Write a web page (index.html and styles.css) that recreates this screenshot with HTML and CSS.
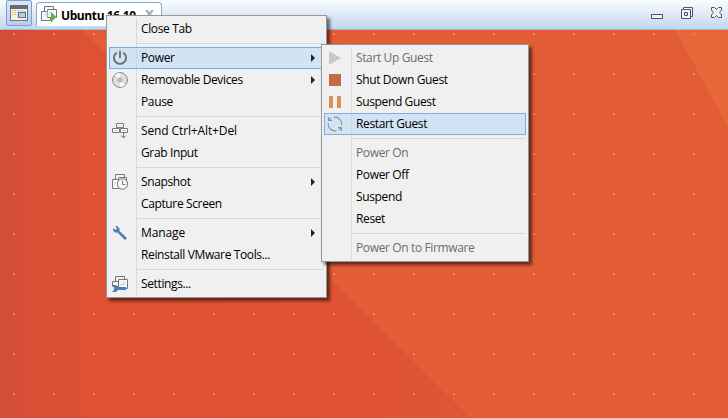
FILE: index.html
```html
<!DOCTYPE html>
<html lang="en">
<head>
<meta charset="utf-8">
<title>Ubuntu 16.10</title>
<link rel="stylesheet" href="styles.css">
</head>
<body>
<header class="tabbar">
  <button class="library" aria-label="Library">
    <svg width="18" height="16" viewBox="0 0 18 16"><rect x=".5" y=".5" width="17" height="15" fill="#f1f1ee" stroke="#767674"/><path fill="#6b6b69" d="M0 0h18v4H0z"/><path stroke="#e0b45c" d="M2 5.500h1m1 0h2M2 7.500h1m1 0h2M2 9.500h1m1 0h2"/><path fill="#cfe0f0" d="M7 5h9v7H7z"/><rect x="8.500" y="7.500" width="7" height="5" fill="#bccde0" stroke="#6d6e70"/></svg>
  </button>
  <div class="tab">
    <svg width="17" height="17" viewBox="0 0 17 17"><g fill="#fafafa" stroke="#747474"><path d="M3.500 .500h9v9h-9z"/><path d="M.500 5.500h9v9h-9z"/><path d="M6.500 3.500h9v8h-9z"/></g><path d="M3 8.500h5m-2-4v7M8 6.500h4" stroke="#c6d5e8" fill="none"/><path d="M10 6l5.500 5L10 16.500z" fill="#5dbb3d"/></svg>
    <span class="tab-title">Ubuntu 16.10</span>
    <svg class="tab-close" width="9" height="8" viewBox="0 0 9 8"><path d="M1.200 0l6.600 8M7.800 0L1.200 8" stroke="#8fb4d3" stroke-width="2.200"/></svg>
  </div>
  <div class="window-buttons">
    <svg width="12" height="12" viewBox="0 0 12 12"><rect x=".5" y="7.500" width="11" height="4" fill="#f5f2f2" stroke="#50546a"/></svg>
    <svg width="12" height="12" viewBox="0 0 12 12"><path d="M2.500 .500h9v9h-9z" fill="#f5f5f5" stroke="#50546a"/><path d="M.500 2.500h9v9h-9z" fill="#f2f2f2" stroke="#50546a"/><path d="M3.500 5.500h3v3h-3z" fill="#d5e5f5" stroke="#50546a"/></svg>
    <svg width="11" height="11" viewBox="0 0 11 11"><path d="M.500 .500h3l2 2 2-2h3v2.500l-2 2.500 2 2.500v2.500h-3l-2-2-2 2h-3v-2.500l2-2.500-2-2.500z" fill="#f5f2f2" stroke="#50546a"/></svg>
  </div>
</header>
<main class="desktop">
  <svg class="wallpaper" width="728" height="388" viewBox="0 0 728 388">
    <defs>
      <linearGradient id="shade"><stop offset="0" stop-color="#d44e38"/><stop offset=".2" stop-color="#de5133"/><stop offset="1" stop-color="#df5432"/></linearGradient>
      <pattern id="dots" width="40" height="40" patternUnits="userSpaceOnUse"><path d="M13 3h2v2h-2z" fill="#e88465"/></pattern>
    </defs>
    <path d="M0 0h728v388H0z" fill="#e25c35"/>
    <path d="M0 0h82l388 388H0z" fill="url(#shade)"/>
    <path d="M675 0h53v97z" fill="#e86639"/>
    <path d="M0 0h728v388H0z" fill="url(#dots)"/>
  </svg>
</main>

<nav class="menu menu-vm">
  <div class="item"><span class="label">Close Tab</span></div>
  <hr>
  <div class="item selected"><span class="icon"><svg width="16" height="16" viewBox="0 0 16 16"><path d="M4.800 2.600a6.100 6.100 0 1 0 6.400 0M8 .5v7.500" fill="none" stroke="#747474" stroke-width="2"/></svg></span><span class="label">Power</span><i class="arrow"></i></div>
  <div class="item"><span class="icon"><svg width="16" height="16" viewBox="0 0 16 16"><circle cx="8" cy="8" r="7.400" fill="#e0e0e0" stroke="#858585"/><path d="M8 8L3 3a7 7 0 0 1 5-2zM8 8l5 5a7 7 0 0 1-5 2z" fill="#f8f8f8"/><circle cx="8" cy="8" r="2" fill="#f4f4f4" stroke="#999"/><circle cx="8" cy="8" r=".8" fill="#777"/></svg></span><span class="label">Removable Devices</span><i class="arrow"></i></div>
  <div class="item"><span class="label">Pause</span></div>
  <hr>
  <div class="item"><span class="icon"><svg width="16" height="16" viewBox="0 0 16 16"><g fill="#fff" stroke="#777"><path d="M4.500 .500h7v4h-7z"/><path d="M.500 5.500h7v4h-7z"/><path d="M8.500 5.500h7v4h-7z"/></g><path d="M6 2.500h4M2 7.500h4m4 0h4" stroke="#c6d9ec"/><path d="M11.500 9v6M9 12.500l2.500 2.500 2.500-2.500" fill="none" stroke="#777"/></svg></span><span class="label wide">Send Ctrl+Alt+Del</span></div>
  <div class="item"><span class="label">Grab Input</span></div>
  <hr>
  <div class="item"><span class="icon"><svg width="16" height="16" viewBox="0 0 16 16"><g fill="#f7f7f7" stroke="#777"><path d="M3.500 .500h9v8h-9z"/><path d="M.500 5.500h9v9h-9z"/><path d="M6.500 3.500h8v8h-8z"/><circle cx="10.500" cy="10" r="5.200"/></g><path d="M10.500 6.500v4h3" fill="none" stroke="#777"/><path d="M2 8.500h2" stroke="#c6d9ec"/></svg></span><span class="label">Snapshot</span><i class="arrow"></i></div>
  <div class="item"><span class="label">Capture Screen</span></div>
  <hr>
  <div class="item"><span class="icon"><svg width="16" height="16" viewBox="0 0 16 16"><path d="M3 1l2 0 2.500 2.500 0 2.500 7.500 7-2 2-7.500-7.500-2.500 0L1 5.500V3l2.500 2L5 3.500z" fill="#4a7fb8"/></svg></span><span class="label wide">Manage</span><i class="arrow"></i></div>
  <div class="item"><span class="label">Reinstall VMware Tools...</span></div>
  <hr>
  <div class="item"><span class="icon"><svg width="16" height="16" viewBox="0 0 16 16"><g fill="#f7f7f7" stroke="#777"><path d="M3.500 .500h9v8h-9z"/><path d="M.500 5.500h9v5h-9z"/><path d="M6.500 3.500h9v9h-9z"/></g><path d="M8 8.500h4V5" fill="none" stroke="#b9c9da"/><path d="M0 9h4l2 2h8v3H6l-2 2H0l2-2v-3z" fill="#4a7fb8"/></svg></span><span class="label">Settings...</span></div>
</nav>

<nav class="menu menu-power">
  <div class="item disabled"><span class="icon"><svg width="16" height="16" viewBox="0 0 16 16"><path d="M2 1l12 7-12 7z" fill="#c8c8c8"/></svg></span><span class="label">Start Up Guest</span></div>
  <div class="item"><span class="icon"><svg width="16" height="16" viewBox="0 0 16 16"><path d="M2 2h12v12H2z" fill="#c26b48"/></svg></span><span class="label">Shut Down Guest</span></div>
  <div class="item"><span class="icon"><svg width="16" height="16" viewBox="0 0 16 16"><path d="M2 2h4v12H2zM10 2h4v12h-4z" fill="#d6944e"/></svg></span><span class="label">Suspend Guest</span></div>
  <div class="item selected"><span class="icon"><svg width="16" height="16" viewBox="0 0 16 16"><path d="M6.500 1.300A6.800 6.800 0 0 1 14.600 9M1.500 1v3.500H5M1.800 4.300L4.500 1.800M1.300 7A6.800 6.800 0 0 0 9.500 14.700M14.500 15v-3.500H11M14.200 11.700L11.500 14.200" fill="none" stroke="#8c8f92" stroke-width="1.100"/></svg></span><span class="label">Restart Guest</span></div>
  <hr>
  <div class="item disabled"><span class="label">Power On</span></div>
  <div class="item"><span class="label">Power Off</span></div>
  <div class="item"><span class="label">Suspend</span></div>
  <div class="item"><span class="label">Reset</span></div>
  <hr>
  <div class="item disabled"><span class="label">Power On to Firmware</span></div>
</nav>
</body>
</html>
```
FILE: styles.css
```css
* { box-sizing: border-box; }
body {
  margin: 0;
  width: 728px;
  height: 418px;
  overflow: hidden;
  font: 12px/22px "Open Sans", "Noto Sans", sans-serif;
  letter-spacing: -0.37px;
  color: #000;
}
.tabbar {
  display: flex;
  height: 30px;
  padding-left: 6px;
  background: linear-gradient(#fafcfe, #c3d7ec);
  border-bottom: 1px solid #9db9d3;
}
.library {
  width: 26px;
  height: 26px;
  padding: 4px 0 0;
  border: 1px solid #7b9fd0;
  border-radius: 2px;
  background: linear-gradient(#dbe8f6, #b3cfee);
  display: flex;
  justify-content: center;
}
.tab {
  display: flex;
  width: 126px;
  height: 24px;
  margin: 2px 0 0 4px;
  padding: 3px 0 0 4px;
  border: 1px solid #86aace;
  border-bottom: 0;
  border-radius: 4px 4px 0 0;
  background: #fff;
}
.tab-title {
  width: 75px;
  margin-left: 3px;
  font-weight: 700;
  line-height: 19px;
  letter-spacing: -0.4px;
  white-space: nowrap;
}
.tab-close { margin: 4px 0 0 9px; }
.window-buttons {
  display: flex;
  gap: 18px;
  margin-left: auto;
  padding: 7px 6px 0 0;
}
.desktop { height: 388px; }
.wallpaper { display: block; }
.menu {
  position: absolute;
  padding: 2px;
  border: 1px solid #979797;
  background: linear-gradient(90deg, transparent 29px, #d8d8d8 29px 30px, transparent 30px) no-repeat 0 2px / 100% calc(100% - 4px), #f0f0f0;
  box-shadow: 3px 3px 3px rgba(0, 0, 0, .55);
}
.menu-vm { left: 106px; top: 15px; width: 221px; height: 283px; }
.menu-power { left: 321px; top: 44px; width: 208px; height: 218px; }
.item {
  display: flex;
  align-items: center;
  height: 22px;
  border: 1px solid transparent;
}
.selected {
  background: rgba(180, 215, 245, .5);
  border-color: #78aee5;
}
.icon { display: flex; width: 16px; margin-left: 2px; }
.label { margin-left: 31px; white-space: nowrap; }
.icon + .label { margin-left: 13px; }
.wide { letter-spacing: -0.12px; }
.disabled { color: #6d6d6d; }
.arrow {
  margin: 0 8px 0 auto;
  border: 4px solid transparent;
  border-left-color: #222;
  border-right: 0;
}
hr {
  height: 1px;
  margin: 3px 0 3px 28px;
  border: 0;
  background: #d7d7d7;
}
```
